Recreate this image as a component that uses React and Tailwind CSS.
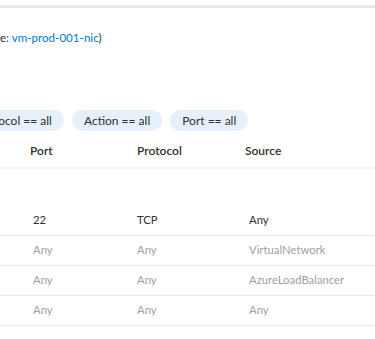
import React from "react";

const rows = [
  { port: "22", protocol: "TCP", source: "Any", active: true },
  { port: "Any", protocol: "Any", source: "VirtualNetwork" },
  { port: "Any", protocol: "Any", source: "AzureLoadBalancer" },
  { port: "Any", protocol: "Any", source: "Any" },
];

const filters = ["Protocol == all", "Action == all", "Port == all"];

export default function App() {
  return (
    <div
      className="w-[375px] h-[339px] overflow-hidden bg-white text-[#323130]"
      style={{ fontFamily: "'Segoe UI', Lato, 'Noto Sans', sans-serif" }}
    >
      {/* top shadow edge */}
      <div className="h-[5px]" />
      <div className="h-[3px] bg-[#e6e6e6] border-t border-[#eeeeee]" />

      {/* subtitle */}
      <div className="pt-[22px] h-[60px] text-[11.6px] leading-[16px] whitespace-nowrap">
        e: <span className="text-[#0078d4]">vm-prod-001-nic</span>)
      </div>

      {/* filter pills */}
      <div className="mt-[42px] flex items-center gap-2 -ml-[36px] whitespace-nowrap">
        {filters.map((f) => (
          <span
            key={f}
            className="h-[21px] flex items-center px-3 rounded-full bg-[#e5f0fb] text-[12px] text-[#323130]"
          >
            {f}
          </span>
        ))}
      </div>

      {/* table header */}
      <div className="mt-[6px] h-[32px] pb-[3px] flex items-center text-[12px] font-semibold border-b-2 border-[#f5f5f5]">
        <div className="w-[137px] pl-[30px]">Port</div>
        <div className="w-[108px]">Protocol</div>
        <div>Source</div>
      </div>

      {/* group row */}
      <div className="h-[37px]" />

      {/* rows */}
      {rows.map((r, i) => (
        <div
          key={i}
          className={`h-[30px] flex items-center text-[11.3px] whitespace-nowrap border-b border-[#ebeae8] ${
            r.active ? "text-[#323130]" : "text-[#a19f9d]"
          }`}
        >
          <div className="w-[137px] pl-[33px]">{r.port}</div>
          <div className="w-[112px]">{r.protocol}</div>
          <div>{r.source}</div>
        </div>
      ))}
    </div>
  );
}
